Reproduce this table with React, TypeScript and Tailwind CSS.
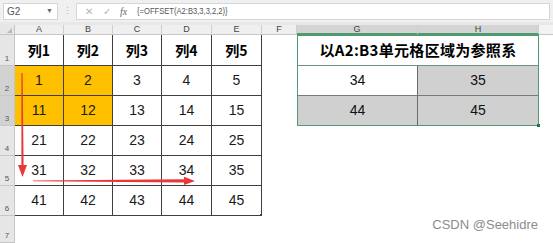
const COLS = ["A", "B", "C", "D", "E", "F", "G", "H"];

const DATA = [
  ["1", "2", "3", "4", "5"],
  ["11", "12", "13", "14", "15"],
  ["21", "22", "23", "24", "25"],
  ["31", "32", "33", "34", "35"],
  ["41", "42", "43", "44", "45"],
];

const ROW_H = ["h-[31px]", "h-[30px]", "h-[30px]", "h-[30px]", "h-[30px]", "h-[30px]", "h-[27px]"];

function FormulaBar() {
  return (
    <div className="flex h-[22px] items-center gap-[5px] bg-[#f0f0f0] px-[3px] text-[10px] text-[#555]">
      <div className="flex h-[17px] w-[55px] items-center justify-between border border-[#d6d6d6] bg-white pl-[3px] pr-[4px]">
        <span>G2</span>
        <span className="text-[7px] text-[#666]">▼</span>
      </div>
      <span className="w-[8px] text-center text-[9px] leading-none text-[#b0b0b0]">⋮</span>
      <div className="flex h-[17px] flex-1 items-center border border-[#d6d6d6] bg-white">
        <span className="ml-[8px] w-[14px] text-[10px] text-[#b5b5b5]">✕</span>
        <span className="ml-[4px] w-[14px] text-[10px] text-[#b5b5b5]">✓</span>
        <span className="ml-[3px] w-[14px] font-['Liberation_Serif',serif] text-[10px] italic text-[#666]">fx</span>
        <span className="ml-[3px] inline-block origin-left scale-x-[0.8] text-[9.5px] text-[#555]">
          {"{=OFFSET(A2:B3,3,3,2,2)}"}
        </span>
      </div>
    </div>
  );
}

function RowHeader({ n }: { n: number }) {
  const sel = n === 2 || n === 3;
  return (
    <div
      className={`flex items-end justify-center border-r border-b border-[#c6c6c6] pb-[2px] text-[8px] leading-none text-[#555] ${
        sel ? "bg-[#d2d2d2]" : "bg-[#e6e6e6]"
      }`}
    >
      {n}
    </div>
  );
}

function RightTable({ row }: { row: number }) {
  if (row === 1)
    return (
      <div className="col-span-2 flex items-center justify-center border-x border-t border-b border-x-[#4f9a70] border-t-[#4f9a70] border-b-[#6f8f7e] bg-white font-['Noto_Sans_CJK_SC',sans-serif] text-[15px] font-bold tracking-[0.3px] text-black">
        以A2:B3单元格区域为参照系
      </div>
    );
  if (row === 2)
    return (
      <>
        <div className="flex items-center justify-center border-l border-r border-b border-l-[#4f9a70] border-r-[#6a6a6a] border-b-[#7a7a7a] bg-white text-[14px]">34</div>
        <div className="flex items-center justify-center border-r border-b border-r-[#4f9a70] border-b-[#7a7a7a] bg-[#d0d0d0] text-[14px]">35</div>
      </>
    );
  if (row === 3)
    return (
      <>
        <div className="flex items-center justify-center border-l border-r border-b border-l-[#4f9a70] border-r-[#6a6a6a] border-b-[#4f9a70] bg-[#d0d0d0] text-[14px]">44</div>
        <div className="relative flex items-center justify-center border-r border-b border-[#4f9a70] bg-[#d0d0d0] text-[14px]">
          45
          <span className="absolute -right-[2px] -bottom-[2px] h-[3px] w-[3px] bg-[#217346]" />
        </div>
      </>
    );
  return (
    <>
      <div />
      <div />
    </>
  );
}

function Arrows() {
  return (
    <svg className="pointer-events-none absolute left-0 top-0" width="553" height="243">
      <polygon points="21.4,73 22.6,73 23.6,165 27,165 22.5,177 18,165 21.4,165" fill="#e8383a" />
      <polygon points="33,180.4 184,179.2 184,176.8 195,181 184,185 184,182.6 33,181.2" fill="#e8383a" />
    </svg>
  );
}

export default function App() {
  return (
    <div className="relative h-[243px] w-[553px] overflow-hidden bg-white font-['Liberation_Sans',Arial,sans-serif] text-[#111]">
      <FormulaBar />
      <div className="h-[3px] bg-[#e8e8e8]" />
      <div className="grid grid-cols-[15px_49px_49px_49px_50px_50px_35px_121px_121px_1fr]">
        {/* column headers */}
        <div className="relative h-[10px] border-r border-b border-[#c6c6c6] bg-[#e6e6e6]">
          <svg className="absolute right-[2px] bottom-[1px]" width="5" height="5">
            <polygon points="5,0 5,5 0,5" fill="#b8b8b8" />
          </svg>
        </div>
        {COLS.map((c) => {
          const sel = c === "G" || c === "H";
          return (
            <div
              key={c}
              className={`flex h-[10px] items-center justify-center border-r border-[#cfcfcf] text-[9px] leading-none text-[#444] ${
                sel ? "border-b-2 border-b-[#4f9a70] bg-[#d4d4d4]" : "border-b border-b-[#c6c6c6] bg-[#efefef]"
              }`}
            >
              {c}
            </div>
          );
        })}
        <div className="h-[10px] border-b border-[#c6c6c6] bg-[#f3f3f3]" />

        {ROW_H.map((h, i) => {
          const r = i + 1;
          return (
            <div key={r} className="contents">
              <div className={`${h} grid`}>
                <RowHeader n={r} />
              </div>
              {[0, 1, 2, 3, 4].map((c) => {
                if (r > 6) return <div key={c} />;
                const orange = (r === 2 || r === 3) && c < 2;
                const text = r === 1 ? `列${c + 1}` : DATA[r - 2][c];
                return (
                  <div
                    key={c}
                    className={`relative flex items-center justify-center border-r border-b border-[#3f3f3f] ${
                      orange ? "bg-[#ffc000]" : "bg-white"
                    } ${
                      r === 1
                        ? "font-['Noto_Sans_CJK_SC',sans-serif] text-[14px] font-bold text-black"
                        : "text-[14px] text-[#1a1a1a]"
                    }`}
                  >
                    {text}
                    {r === 6 && c === 4 ? (
                      <span className="absolute -right-[1px] -bottom-[1px] h-[2px] w-[2px] bg-[#3f3f3f]" />
                    ) : null}
                  </div>
                );
              })}
              <div />
              <RightTable row={r} />
              <div />
            </div>
          );
        })}
      </div>
      <Arrows />
      <div className="absolute right-[15px] bottom-[9px] text-[13px] text-[#8c8c8c]">CSDN @Seehidre</div>
    </div>
  );
}
